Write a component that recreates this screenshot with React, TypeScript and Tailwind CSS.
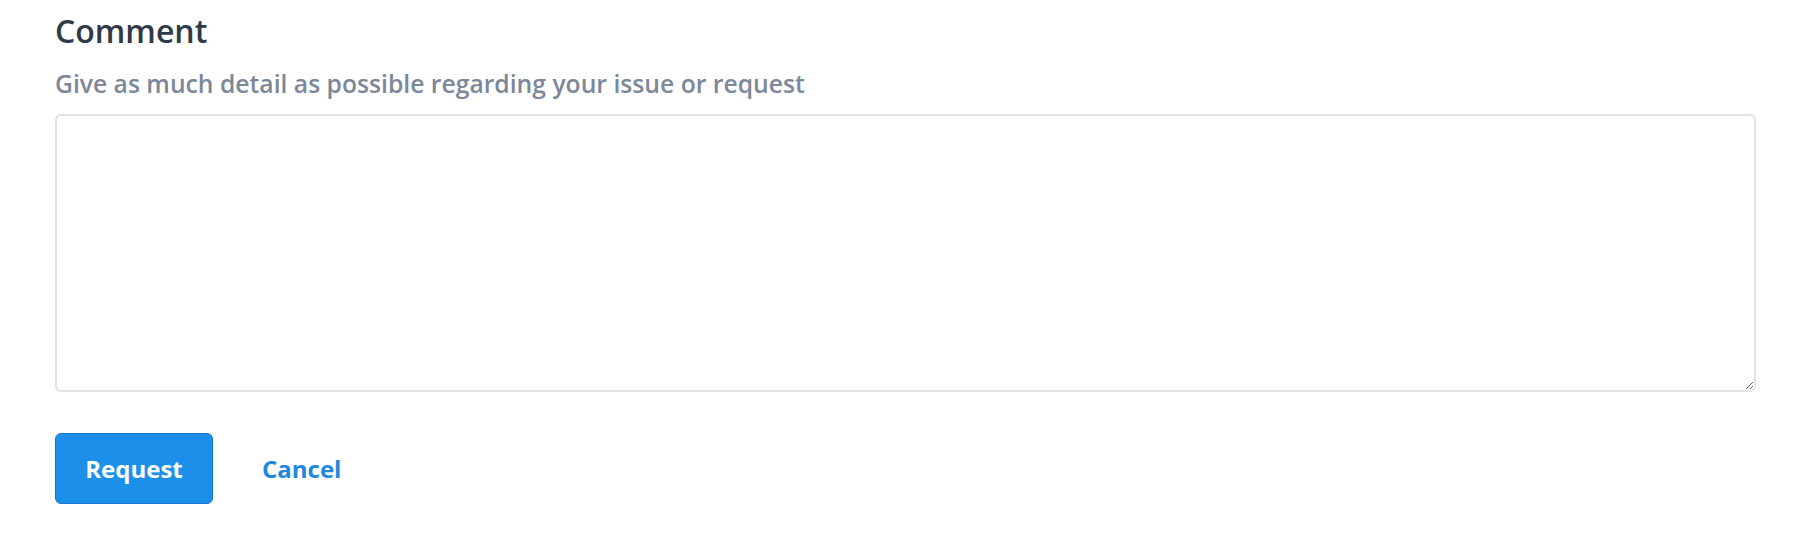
export default function App() {
  return (
    <div className="min-h-[540px] bg-white pl-[55px] pr-[57px] pt-[11px] font-['Open_Sans',sans-serif]">
      <h2 className="text-[32px] leading-[40px] font-semibold text-[#303946]">Comment</h2>
      <p className="mt-[17px] text-[24.7px] leading-[32px] font-semibold text-[#7c889a]">
        Give as much detail as possible regarding your issue or request
      </p>
      <textarea className="mt-[14px] block h-[278px] w-full rounded-[6px] border-2 border-[#e3e3e3] bg-white p-3 text-[22px] text-[#313a46] outline-none" />
      <div className="mt-[41px] flex items-center">
        <button className="flex h-[71px] w-[158px] items-center justify-center rounded-[6px] border border-[#1877cc] bg-[#1b8fe9] text-[24px] font-bold text-white">
          Request
        </button>
        <button className="ml-[49px] text-[24px] font-bold text-[#1f87dc]">Cancel</button>
      </div>
    </div>
  );
}
